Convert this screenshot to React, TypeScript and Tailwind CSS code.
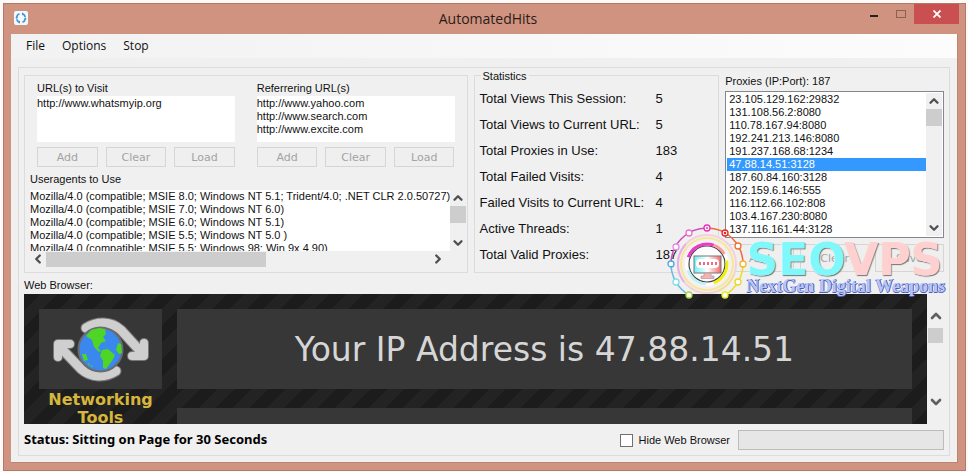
import React from 'react';
import { ChevronUp, ChevronDown, ChevronLeft, ChevronRight } from 'lucide-react';

const stats: [string, string][] = [
  ['Total Views This Session:', '5'],
  ['Total Views to Current URL:', '5'],
  ['Total Proxies in Use:', '183'],
  ['Total Failed Visits:', '4'],
  ['Failed Visits to Current URL:', '4'],
  ['Active Threads:', '1'],
  ['Total Valid Proxies:', '187'],
];

const proxies = [
  '23.105.129.162:29832',
  '131.108.56.2:8080',
  '110.78.167.94:8080',
  '192.241.213.146:8080',
  '191.237.168.68:1234',
  '47.88.14.51:3128',
  '187.60.84.160:3128',
  '202.159.6.146:555',
  '116.112.66.102:808',
  '103.4.167.230:8080',
  '137.116.161.44:3128',
];

const agents = [
  'Mozilla/4.0 (compatible; MSIE 8.0; Windows NT 5.1; Trident/4.0; .NET CLR 2.0.50727)',
  'Mozilla/4.0 (compatible; MSIE 7.0; Windows NT 6.0)',
  'Mozilla/4.0 (compatible; MSIE 6.0; Windows NT 5.1)',
  'Mozilla/4.0 (compatible; MSIE 5.5; Windows NT 5.0 )',
  'Mozilla/4.0 (compatible; MSIE 5.5; Windows 98; Win 9x 4.90)',
];

function GreyButton({ children, className = '' }: { children: React.ReactNode; className?: string }) {
  return (
    <button
      disabled
      className={`border border-[#d5d5d5] bg-[#efefef] font-['DejaVu_Sans',sans-serif] text-[11px] leading-[17px] text-[#a3a3a3] ${className}`}
    >
      {children}
    </button>
  );
}

function UrlBox({ id, label, value }: { id: string; label: string; value: string }) {
  return (
    <div className="min-w-0">
      <label htmlFor={id} className="block h-4 leading-4">
        {label}
      </label>
      <textarea
        id={id}
        readOnly
        defaultValue={value}
        className="block h-[46px] w-full resize-none overflow-hidden bg-white pt-px leading-[13px] outline-none"
      />
      <div className="mt-[5px] flex gap-2">
        <GreyButton className="h-5 flex-1">Add</GreyButton>
        <GreyButton className="h-5 flex-1">Clear</GreyButton>
        <GreyButton className="h-5 flex-1">Load</GreyButton>
      </div>
    </div>
  );
}

function VScroll({ thumb }: { thumb: string }) {
  return (
    <div className="flex w-4 shrink-0 flex-col items-center bg-[#f0f0f0] text-[#505050]">
      <ChevronUp size={14} strokeWidth={4} className="my-px shrink-0" />
      <div className={`w-full bg-[#cdcdcd] ${thumb}`} />
      <ChevronDown size={14} strokeWidth={4} className="mt-auto mb-px shrink-0" />
    </div>
  );
}

function AppIcon() {
  return (
    <svg viewBox="0 0 14 14" className="size-[14px]">
      <rect width="14" height="14" rx="2" fill="#f4f8fb" />
      <g fill="none" stroke="#3d95d6" strokeWidth="1.6">
        <path d="M5.5 2.8 A4.4 4.4 0 0 0 2.6 6.4" />
        <path d="M8.2 2.8 A4.4 4.4 0 0 1 11.3 6" />
        <path d="M11.3 8 A4.4 4.4 0 0 1 8.5 11.2" />
        <path d="M5.6 11.2 A4.4 4.4 0 0 1 2.7 8.2" />
      </g>
      <path d="M8 1.2 L8 4.6 L10 3z M6 9.5 L6 12.8 L4 11z M1.2 6 L4.2 6 L2.7 8z M9.8 8.2 L12.8 8.2 L11.3 6.3z" fill="#3d95d6" />
    </svg>
  );
}

function Globe() {
  return (
    <svg viewBox="0 0 123 80" className="block h-20 w-full">
      <g fill="none" strokeLinecap="round" strokeLinejoin="round">
        <g stroke="#777" strokeWidth="11">
          <path d="M47 19 C58 12 72 12 82 21 L103 44" />
          <path d="M77 62 C66 69 52 69 42 60 L21 38" />
        </g>
        <g stroke="#777" strokeWidth="10">
          <path d="M93 47 H105 V34" />
          <path d="M19 48 V35 H31" />
        </g>
        <g stroke="#cfcfcf" strokeWidth="9">
          <path d="M47 19 C58 12 72 12 82 21 L103 44" />
          <path d="M77 62 C66 69 52 69 42 60 L21 38" />
        </g>
        <g stroke="#cfcfcf" strokeWidth="8">
          <path d="M93 47 H105 V34" />
          <path d="M19 48 V35 H31" />
        </g>
      </g>
      <circle cx="61.5" cy="40.5" r="22" fill="#3a87ee" stroke="#6b6b6b" strokeWidth="2" />
      <g fill="#4fd526">
        <path d="M47 27 L52 21 L60 19 L66 20 L67 25 L64 28 L67 32 L62 34 L59 39 L62 42 L60 43 L55 38 L53 31z" />
        <path d="M63 41 L69 40 L76 46 L73 52 L67 60 L64 59 L64 52 L61 47z" />
        <path d="M79 34 L82 35 L83 44 L80 45 L77 41z" />
        <path d="M43 45 L47 45 L49 51 L45 52z" />
        <path d="M49 54 L51 55 L50 57z M52 56 L54 57 L52 58z" />
      </g>
    </svg>
  );
}

const dots: [number, number, string][] = [
  [43, 8, '#ee2bb8'], [25, 13, '#f070c8'], [12, 27, '#e58be0'], [7, 44, '#4aa8e0'],
  [12, 62, '#7fe0e8'], [25, 75, '#a8d840'], [61, 75, '#e8ee20'], [74, 62, '#e8d820'],
  [79, 44, '#f0b830'], [74, 26, '#f07030'], [61, 13, '#e82828'],
];

function Emblem() {
  return (
    <svg viewBox="0 0 86 84" className="h-[84px] w-[86px] shrink-0">
      <defs>
        <linearGradient id="screen">
          <stop offset="0" stopColor="#6ff0f4" />
          <stop offset="0.5" stopColor="#fff" />
          <stop offset="1" stopColor="#f46a6a" />
        </linearGradient>
      </defs>
      <circle cx="43" cy="44" r="30" fill="#f3f0ee" fillOpacity="0.85" />
      <g fill="none">
        <path d="M25 75 A36 36 0 0 1 7 44" stroke="#6cb8e0" strokeWidth="1.5" />
        <path d="M7 44 A36 36 0 0 1 43 8" stroke="#c850b8" strokeWidth="1.5" />
        <path d="M43 8 A36 36 0 0 1 79 44" stroke="#ef6a40" strokeWidth="1.5" />
        <path d="M79 44 A36 36 0 0 1 61 75" stroke="#eedc20" strokeWidth="1.5" />
        <circle cx="43" cy="44" r="29" stroke="#f3d0dc" strokeWidth="2" />
        <circle cx="43" cy="44" r="26" stroke="#f5e69a" strokeWidth="2" />
        <path d="M20 62 A29 29 0 0 1 22 24" stroke="#eab0e4" strokeWidth="2" />
        <path d="M54 71 A29 29 0 0 0 70 54" stroke="#f5e27a" strokeWidth="1.5" />
        <circle cx="43" cy="44" r="20" fill="#fff" fillOpacity="0.8" stroke="#fff" strokeWidth="4" />
        <circle cx="43" cy="44" r="18" stroke="#444" strokeWidth="1.2" />
        <path d="M24.200 37.200 A20 20 0 0 1 49.800 25.200" stroke="#ee38c8" strokeWidth="3" />
        <path d="M49.800 25.200 A20 20 0 0 1 60.300 34" stroke="#fa9a9a" strokeWidth="3" />
        <path d="M62.700 40.500 A20 20 0 0 1 49.800 62.800" stroke="#f2ee10" strokeWidth="3" />
        <path d="M23.900 50 A20 20 0 0 0 42 64" stroke="#bff2f4" strokeWidth="3" />
      </g>
      <rect x="30" y="36" width="27" height="17" fill="url(#screen)" stroke="#777" />
      <path d="M40 53 H47 V56 H50 V58.5 H37 V56 H40z" fill="#f9b0b0" stroke="#999" strokeWidth="0.6" />
      <rect x="32" y="39" width="23" height="9" rx="4" fill="#fff" />
      <path d="M35 43.5 H53" stroke="#f06a80" strokeWidth="3" strokeDasharray="2 2" />
      {dots.map(([x, y, c]) => (
        <circle key={`${x}-${y}`} cx={x} cy={y} r="3" fill="#fff" stroke={c} strokeWidth="1.3" />
      ))}
      <circle cx="43" cy="8" r="1" fill="#ee2bb8" />
      <circle cx="61" cy="13" r="1.3" fill="#e82828" />
    </svg>
  );
}

export default function App() {
  return (
    <div className="bg-[#fdf9f7] pt-[3px] pr-[2px] pb-[1px] pl-[3px] font-['Liberation_Sans',Arial,sans-serif] text-[11px] text-[#111]">
      <main className="relative border border-[#ad7a6d] bg-[#d09380] px-[7px] pb-[7px]">
        <header className="-mr-[7px] grid h-[30px] grid-cols-[1fr_auto_1fr]">
          <div className="pt-[7px] pl-[3px]">
            <AppIcon />
          </div>
          <h1 className="pt-[3px] font-['Open_Sans',sans-serif] text-[14px] leading-6 text-[#2b1c18]">AutomatedHits</h1>
          <div className="flex items-start justify-end pr-[6px]">
            <button aria-label="Minimize" className="flex h-5 w-7 items-center justify-center">
              <span className="mt-1 h-[2px] w-2 bg-[#222]" />
            </button>
            <button aria-label="Maximize" className="flex h-5 w-[26px] items-center justify-center">
              <span className="h-2 w-[10px] border border-[#8d6150]" />
            </button>
            <button aria-label="Close" className="flex h-5 w-[45px] items-center justify-center bg-[#c94f50]">
              <svg viewBox="0 0 8 8" className="size-2">
                <path d="M0.5 0.5 L7.5 7.5 M7.5 0.5 L0.5 7.5" stroke="#fff" strokeWidth="1.8" />
              </svg>
            </button>
          </div>
        </header>

        <div className="border-r border-b border-[#b98474] bg-[#f0f0f0] pb-[6px]">
          <nav className="flex h-6 items-center gap-[17px] bg-linear-to-r from-[#f2f2f2] to-[#fcfcfc] pl-[15px] font-['Open_Sans',sans-serif] text-[12px] leading-6 text-[#111]">
            <button>File</button>
            <button>Options</button>
            <button>Stop</button>
          </nav>

          <div className="mx-[7px] mt-[9px] border border-[#dcdcdc] pt-[7px] pr-[5px] pb-[5px] pl-[5px]">
            <div className="grid grid-cols-[444fr_246fr_219fr] gap-x-[6px]">
              <section className="min-w-0 border border-[#dcdcdc] pt-1 pr-px pb-[5px] pl-[5px]">
                <div className="grid grid-cols-2 gap-[22px] pr-[11px] pl-[7px]">
                  <UrlBox id="visit" label="URL(s) to Visit" value="http://www.whatsmyip.org" />
                  <UrlBox
                    id="refer"
                    label="Referrering URL(s)"
                    value={'http://www.yahoo.com\nhttp://www.search.com\nhttp://www.excite.com'}
                  />
                </div>
                <h2 className="mt-1 h-[19px] leading-4">Useragents to Use</h2>
                <div className="flex h-[61px]">
                  <ul className="min-w-0 flex-1 overflow-hidden bg-white leading-[13px] whitespace-nowrap">
                    {agents.map((a) => (
                      <li key={a}>{a}</li>
                    ))}
                  </ul>
                  <VScroll thumb="h-[17px]" />
                </div>
                <div className="mr-5 flex h-4 items-center text-[#505050]">
                  <ChevronLeft size={14} strokeWidth={4} className="mx-px shrink-0" />
                  <div className="h-[15px] w-[53%] bg-[#cdcdcd]" />
                  <ChevronRight size={14} strokeWidth={4} className="mr-px ml-auto shrink-0" />
                </div>
              </section>

              <section className="relative min-w-0 border border-[#dcdcdc] px-[5px] pt-[10px]">
                <h2 className="absolute -top-[7px] left-[6px] bg-[#f0f0f0] px-[2px] leading-[14px]">Statistics</h2>
                <dl className="grid auto-rows-[26px] grid-cols-[176px_1fr] text-[13px] leading-[26px] whitespace-nowrap">
                  {stats.map(([k, v]) => (
                    <React.Fragment key={k}>
                      <dt>{k}</dt>
                      <dd>{v}</dd>
                    </React.Fragment>
                  ))}
                </dl>
              </section>

              <section className="min-w-0">
                <h2 className="h-4 leading-[13px]">Proxies (IP:Port): 187</h2>
                <div className="flex border border-[#828790] bg-white p-px">
                  <ul role="listbox" aria-label="Proxies" className="min-w-0 flex-1">
                    {proxies.map((p) => (
                      <li
                        key={p}
                        role="option"
                        aria-selected={p === '47.88.14.51:3128'}
                        className="h-[13px] pl-[2px] leading-[13px] aria-selected:bg-[#3399ff] aria-selected:text-white"
                      >
                        {p}
                      </li>
                    ))}
                  </ul>
                  <VScroll thumb="h-[17px]" />
                </div>
                <div className="mt-[6px] flex gap-[6px]">
                  <GreyButton className="h-7 flex-1">Add</GreyButton>
                  <GreyButton className="h-7 flex-1">Clear</GreyButton>
                  <GreyButton className="h-7 flex-1">Save</GreyButton>
                </div>
              </section>
            </div>

            <h2 className="mt-1 h-[17px] leading-4">Web Browser:</h2>
            <div className="flex h-[130px]">
              <div className="grid min-w-0 flex-1 grid-cols-[123px_1fr] gap-[15px] overflow-hidden bg-[repeating-linear-gradient(135deg,#1c1c1c_0px,#1c1c1c_12px,#232323_12px,#232323_24px)] p-[15px]">
                <div className="text-center font-['DejaVu_Sans',sans-serif] text-[16px] leading-[18px] font-bold text-[#d6b63c]">
                  <div className="mb-[2px] bg-[#373737]">
                    <Globe />
                  </div>
                  Networking Tools
                </div>
                <div>
                  <p className="h-20 bg-[#373737] text-center font-['DejaVu_Sans',sans-serif] text-[33px] leading-[82px] text-[#d6d6d6]">
                    Your IP Address is 47.88.14.51
                  </p>
                  <div className="mt-[19px] h-20 bg-[#373737]" />
                </div>
              </div>
              <div className="flex w-[17px] flex-col items-center pt-[14px] pb-[14px] text-[#606060]">
                <ChevronUp size={16} strokeWidth={4} className="shrink-0" />
                <div className="mt-1 h-[15px] w-[15px] bg-[#cdcdcd]" />
                <ChevronDown size={16} strokeWidth={4} className="mt-auto shrink-0" />
              </div>
            </div>

            <footer className="mt-[6px] flex h-5 items-center">
              <p className="font-['Noto_Sans',sans-serif] text-[13px] font-bold text-black">
                Status: Sitting on Page for 30 Seconds
              </p>
              <label className="ml-auto flex items-center gap-[6px]">
                <input type="checkbox" className="size-[13px] appearance-none border border-[#707070] bg-white" />
                Hide Web Browser
              </label>
              <div role="progressbar" aria-label="Progress" className="ml-2 h-5 w-[206px] border border-[#bcbcbc] bg-[#e6e6e6]" />
            </footer>
          </div>
        </div>

        <div className="pointer-events-none absolute top-[216px] right-[20px] flex items-start">
          <Emblem />
          <div className="-ml-1 pt-[22px] whitespace-nowrap">
            <p className="font-['DejaVu_Sans',sans-serif] text-[44px] leading-[36px] font-bold [text-shadow:0_0_1px_#fff,1px_1px_1px_#666]">
              <span className="text-[#7ff8fb]">SEO</span>
              <span className="text-[#ffd0d0]">VPS</span>
            </p>
            <p className="font-['Liberation_Serif',serif] text-[18px] leading-4 font-bold text-[#b9c6f4] [text-shadow:1px_0_0_#4a5cc0,0_1px_0_#4a5cc0]">
              NextGen Digital Weapons
            </p>
          </div>
        </div>
      </main>
    </div>
  );
}
